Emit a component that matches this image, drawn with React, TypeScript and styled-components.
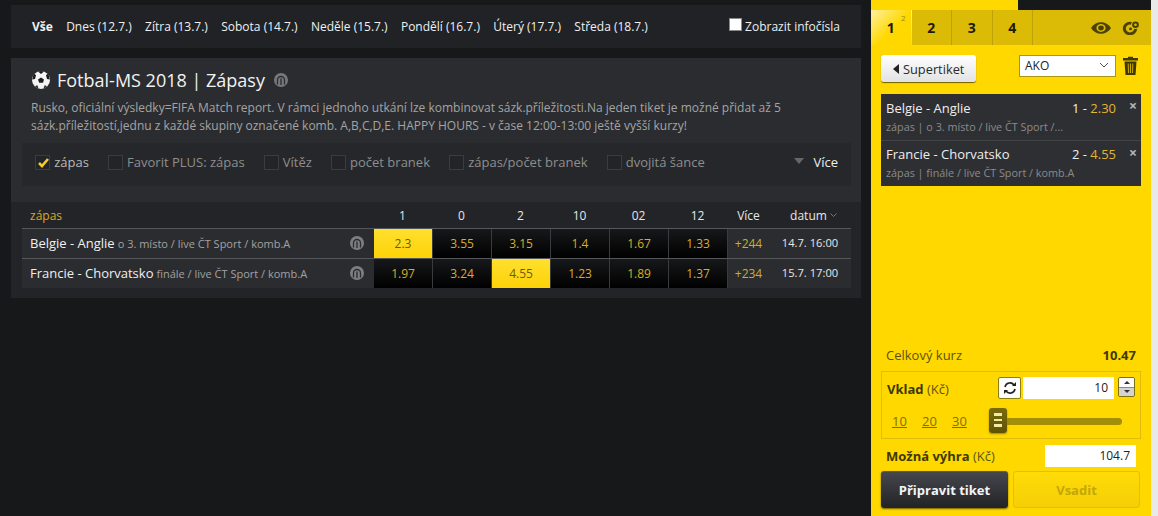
import React from "react";
import styled, { createGlobalStyle } from "styled-components";

const Global = createGlobalStyle`
  html, body { margin: 0; padding: 0; height: 100%; background: #17181a; overflow: hidden; }
  #root { height: 516px; }
  * { box-sizing: border-box; }
`;

const Page = styled.div`
  display: flex;
  width: 1158px;
  height: 516px;
  font-family: "Open Sans", "Liberation Sans", sans-serif;
  font-size: 12px;
  color: #fff;
`;

const Main = styled.main`
  width: 871px;
  padding: 5px 10px 0 11px;
  display: flex;
  flex-direction: column;
  gap: 10px;
`;

const DayBar = styled.nav`
  height: 43px;
  background: #212225;
  display: flex;
  align-items: center;
  padding: 0 21px 0 21px;
`;

const Day = styled.span<{ $active?: boolean }>`
  margin-right: 13.3px;
  font-weight: ${(p) => (p.$active ? 700 : 400)};
  color: #f0f0f0;
  white-space: nowrap;
`;

const InfoToggle = styled.label`
  margin-left: auto;
  display: flex;
  align-items: center;
  gap: 3px;
  color: #eee;
`;

const WhiteBox = styled.span`
  width: 13px;
  height: 13px;
  background: #fff;
  border: 1px solid #8a8a8a;
  margin-top: -4px;
`;

const Panel = styled.section`
  background: #2b2c2f;
  height: 240px;
  display: flex;
  flex-direction: column;
`;

const Head = styled.div`
  padding: 10px 11px 0 21px;
`;

const Title = styled.h1`
  margin: 0;
  display: flex;
  align-items: center;
  font-size: 18px;
  line-height: 24px;
  font-weight: 400;
  color: #f2f2f2;
`;

const Ball = styled.svg`
  width: 18px;
  height: 18px;
  margin-right: 7px;
`;

const StatIcon = styled.svg<{ $size?: number }>`
  width: ${(p) => p.$size ?? 14}px;
  height: ${(p) => p.$size ?? 14}px;
  flex: none;
`;

const TitleStat = styled.span`
  display: flex;
  margin-left: 9px;
  margin-top: -1px;
`;

const Desc = styled.p`
  margin: 7px 0 0 -1px;
  font-size: 12px;
  line-height: 18px;
  color: #a4a4a4;
  white-space: nowrap;
`;

const Filters = styled.div`
  margin: 8px 10px 0 11px;
  height: 43px;
  background: #26272a;
  display: flex;
  align-items: center;
  padding: 0 13px 5px 13px;
`;

const Filter = styled.label<{ $on?: boolean }>`
  display: flex;
  align-items: center;
  gap: 4.2px;
  margin-right: 19px;
  font-size: 13px;
  color: ${(p) => (p.$on ? "#b9b9b9" : "#8e8e8e")};
  white-space: nowrap;
`;

const Box = styled.span<{ $on?: boolean }>`
  position: relative;
  width: 15px;
  height: 15px;
  background: #232427;
  border: 1px solid #3b3c40;
  flex: none;
`;

const Tick = styled.svg`
  position: absolute;
  left: 0;
  top: -1px;
  width: 15px;
  height: 15px;
`;

const More = styled.div`
  margin-left: auto;
  display: flex;
  align-items: center;
  gap: 9px;
  color: #eee;
  font-size: 13px;
`;

const Caret = styled.span`
  width: 0;
  height: 0;
  border-left: 5.5px solid transparent;
  border-right: 5.5px solid transparent;
  border-top: 6px solid #66676a;
  margin-top: -3px;
`;

const Table = styled.div`
  margin: 16px 0 0 0;
  padding: 0 10px 10px 11px;
  background: #232427;
  flex: 1;
`;

const Cols = "352px repeat(6, 59px) 41px 82px";

const HeadRow = styled.div`
  display: grid;
  grid-template-columns: ${Cols};
  height: 26px;
  align-items: center;
  text-align: center;
  color: #e6e6e6;
`;

const HeadName = styled.span`
  text-align: left;
  padding-left: 8px;
  color: #d9a925;
  font-size: 12px;
`;

const ColHead = styled.span`
  padding-right: 2px;
`;

const SortCell = styled.span`
  display: flex;
  align-items: center;
  justify-content: center;
  gap: 3px;
  padding-left: 7px;
`;

const Row = styled.div`
  display: grid;
  grid-template-columns: ${Cols};
  height: 30px;
  border-top: 1px solid #55565a;
  background: #2b2c2f;
  align-items: stretch;
`;

const Match = styled.div`
  display: flex;
  align-items: center;
  padding: 0 10px 1px 8px;
  white-space: nowrap;
  color: #f0f0f0;
  font-size: 13px;
`;

const MatchNote = styled.span`
  margin-left: 3px;
  font-size: 11px;
  color: #a2a2a2;
`;

const MatchStat = styled.span`
  display: flex;
  margin-left: auto;
`;

const Odd = styled.div<{ $on?: boolean }>`
  display: flex;
  align-items: center;
  justify-content: center;
  padding-bottom: 1px;
  border-right: 1px solid #3a3b3e;
  background: ${(p) => (p.$on ? "linear-gradient(#ffe02e, #fdd207)" : "linear-gradient(#17181a, #000)")};
  color: ${(p) => (p.$on ? "#6e5a08" : "#d9ad28")};
`;

const MoreCell = styled.div`
  display: flex;
  align-items: center;
  justify-content: center;
  color: #c9b02b;
  padding-bottom: 1px;
`;

const DateCell = styled.div`
  display: flex;
  align-items: center;
  justify-content: center;
  font-size: 11.2px;
  color: #e8e8e8;
  padding-bottom: 3px;
`;

const Side = styled.aside`
  width: 280px;
  background: #ffd800;
  display: flex;
  flex-direction: column;
  color: #4a4000;
`;

const PageEdge = styled.div`
  width: 7px;
  background: #e9e9e9;
`;

const SideTop = styled.div`
  height: 10px;
  background: #17181a;
  display: flex;
`;

const SideTopFill = styled.div`
  width: 147px;
  background: #ffd800;
`;

const TabBar = styled.div`
  height: 35px;
  background: #dcbb06;
  display: flex;
  align-items: stretch;
`;

const Tab = styled.div<{ $on?: boolean }>`
  position: relative;
  width: 40.5px;
  display: flex;
  align-items: center;
  justify-content: center;
  font-size: 14px;
  font-weight: 700;
  color: #1d1a05;
  border-right: 1px solid #bda207;
  background: ${(p) => (p.$on ? "linear-gradient(135deg, #fff1a0, #ffd800 55%)" : "transparent")};
  border-right-color: ${(p) => (p.$on ? "transparent" : "#bda207")};
`;

const TabCount = styled.sup`
  position: absolute;
  right: 5px;
  top: 3px;
  font-size: 8px;
  line-height: 10px;
  font-weight: 400;
  color: #9d8a1a;
`;

const TabIcons = styled.div`
  margin-left: auto;
  display: flex;
  align-items: center;
  gap: 11px;
  padding-right: 11px;
`;

const Controls = styled.div`
  display: flex;
  align-items: flex-start;
  padding: 10px 10px 0 10px;
`;

const SuperBtn = styled.button`
  width: 95px;
  height: 27px;
  padding: 0 0 0 12px;
  border: 0;
  border-radius: 3px;
  background: linear-gradient(#fff, #e2e2e2);
  box-shadow: 0 1px 1px #6e5f00;
  font: 400 12.8px "Open Sans", sans-serif;
  color: #2a2a2a;
  display: flex;
  align-items: center;
  gap: 4px;
`;

const LeftArrow = styled.span`
  width: 0;
  height: 0;
  border-top: 5px solid transparent;
  border-bottom: 5px solid transparent;
  border-right: 6px solid #222;
`;

const Select = styled.div`
  margin-left: auto;
  width: 97px;
  height: 22px;
  background: #fff;
  border: 1px solid #a9961a;
  display: flex;
  align-items: center;
  justify-content: space-between;
  padding: 0 6px 2px 5px;
  font-size: 12px;
  color: #222;
`;

const Trash = styled.svg`
  width: 15px;
  height: 19px;
  margin: 1px 3px 0 7px;
`;

const Slip = styled.div`
  margin: 12px 10px 0 10px;
  background: #2e2f33;
`;

const SlipItem = styled.div`
  position: relative;
  height: 46px;
  padding: 4px 5px 0;
  & + & {
    padding-top: 3px;
    border-top: 1px solid #434448;
  }
`;

const SlipTop = styled.div`
  display: flex;
  justify-content: space-between;
  padding-right: 20px;
  color: #eee;
  font-size: 13px;
  line-height: 20px;
`;

const SlipOdd = styled.span`
  color: #e2b52a;
`;

const SlipSub = styled.div`
  margin-top: 1px;
  font-size: 10.8px;
  line-height: 16px;
  color: #8b8b8b;
  white-space: nowrap;
`;

const SlipClose = styled.span`
  position: absolute;
  right: 4px;
  top: 3px;
  font-size: 14px;
  line-height: 18px;
  font-weight: 700;
  color: #b5b5b5;
`;

const Bottom = styled.div`
  margin-top: auto;
  padding: 0 10px;
`;

const TotalRow = styled.div`
  display: flex;
  justify-content: space-between;
  padding: 0 5px;
  font-size: 13px;
  line-height: 20px;
  color: #5c5210;
  & b {
    color: #3f3800;
  }
`;

const Stake = styled.div`
  margin-top: 6px;
  height: 68px;
  border: 1px solid #e0bd09;
  padding: 5px 5px 0;
`;

const StakeTop = styled.div`
  display: flex;
  align-items: flex-start;
`;

const Label = styled.span`
  font-size: 13px;
  line-height: 22px;
  color: #5f5412;
  & b {
    font-weight: 700;
    color: #3f3800;
  }
`;

const StakeLabel = styled(Label)`
  padding-top: 1px;
`;

const RefreshBtn = styled.span`
  margin-left: auto;
  margin-right: 2px;
  width: 23px;
  height: 22px;
  display: flex;
  align-items: center;
  justify-content: center;
  background: #fff;
  border: 1px solid #8d7c10;
  border-radius: 2px;
`;

const Input = styled.div<{ $w: number }>`
  width: ${(p) => p.$w}px;
  height: 22px;
  background: #fff;
  color: #222;
  font-size: 12px;
  line-height: 21px;
  text-align: right;
  padding-right: 6px;
`;

const Spin = styled.div`
  margin-left: 4px;
  width: 17px;
  height: 20px;
  border: 1px solid #7d7010;
  border-radius: 2px;
  overflow: hidden;
  display: flex;
  flex-direction: column;
`;

const SpinPart = styled.span<{ $down?: boolean }>`
  flex: 1;
  display: flex;
  align-items: center;
  justify-content: center;
  background: ${(p) => (p.$down ? "#d4d4d4" : "#fff")};
  border-top: ${(p) => (p.$down ? "1px solid #8a8a8a" : "0")};
`;

const Up = styled.span`
  width: 0;
  height: 0;
  border-left: 3px solid transparent;
  border-right: 3px solid transparent;
  border-bottom: 3px solid #333;
`;

const Down = styled(Up)`
  transform: rotate(180deg);
`;

const StakeBottom = styled.div`
  display: flex;
  align-items: center;
  height: 20px;
  margin-top: 11px;
  padding-left: 5px;
`;

const Quick = styled.span`
  width: 30px;
  font-size: 13px;
  color: #7e6e06;
  text-decoration: underline;
`;

const Track = styled.div`
  position: relative;
  margin-left: 11px;
  width: 129px;
  height: 7px;
  background: #a48d07;
  border-radius: 4px;
`;

const Thumb = styled.span`
  position: absolute;
  left: -4px;
  top: -10px;
  width: 18px;
  height: 25px;
  border-radius: 3px;
  background: linear-gradient(#7a6b08, #5f5206);
  box-shadow: 0 1px 2px #9c8806;
  display: flex;
  flex-direction: column;
  align-items: center;
  justify-content: center;
  gap: 3px;
`;

const Grip = styled.i`
  width: 8px;
  height: 2.5px;
  background: #f2e9a8;
`;

const WinRow = styled.div`
  margin-top: 6px;
  display: flex;
  align-items: center;
  justify-content: space-between;
  padding: 0 5px;
`;

const Buttons = styled.div`
  display: flex;
  gap: 5px;
  margin: 4px 0 8px;
`;

const Prepare = styled.button`
  width: 127px;
  height: 37px;
  border: 0;
  border-top: 1px solid #5a5b60;
  border-radius: 3px;
  background: linear-gradient(#46474d, #222326);
  box-shadow: 0 1px 2px #6a5c00;
  color: #f4f4f4;
  font: 700 13px "Open Sans", sans-serif;
`;

const Place = styled.button`
  width: 127px;
  height: 37px;
  border: 1px solid #e3c000;
  border-radius: 3px;
  background: linear-gradient(#ffdb08, #f5cf05);
  color: #c4a60a;
  font: 700 13px "Open Sans", sans-serif;
`;

const StatGlyph = ({ size, color }: { size?: number; color: string }) => (
  <StatIcon $size={size} viewBox="0 0 14 14">
    <circle cx="7" cy="7" r="7" fill={color} />
    <path d="M3.500 11.500V7a3.500 3.500 0 0 1 7 0v4.500M7 12V5.500" fill="none" stroke="#2b2c2f" strokeWidth="1.300" />
  </StatIcon>
);

const days = ["Dnes (12.7.)", "Zítra (13.7.)", "Sobota (14.7.)", "Neděle (15.7.)", "Pondělí (16.7.)", "Úterý (17.7.)", "Středa (18.7.)"];
const filters = ["Favorit PLUS: zápas", "Vítěz", "počet branek", "zápas/počet branek", "dvojitá šance"];
const columns = ["1", "0", "2", "10", "02", "12"];
const matches = [
  { name: "Belgie - Anglie", note: "o 3. místo / live ČT Sport / komb.A", odds: ["2.3", "3.55", "3.15", "1.4", "1.67", "1.33"], on: 0, more: "+244", date: "14.7. 16:00" },
  { name: "Francie - Chorvatsko", note: "finále / live ČT Sport / komb.A", odds: ["1.97", "3.24", "4.55", "1.23", "1.89", "1.37"], on: 2, more: "+234", date: "15.7. 17:00" },
];

export default function App() {
  return (
    <Page>
      <Global />
      <Main>
        <DayBar>
          <Day $active>Vše</Day>
          {days.map((d) => (
            <Day key={d}>{d}</Day>
          ))}
          <InfoToggle>
            <WhiteBox />
            Zobrazit infočísla
          </InfoToggle>
        </DayBar>
        <Panel>
          <Head>
            <Title>
              <Ball viewBox="0 0 18 18">
                <circle cx="9" cy="9" r="9" fill="#f4f4f4" />
                <path d="M6 0.6L9 3l3-2.4A9 9 0 0 0 6 .6zM9 6.500l3 2-1 3.300H7.200L6 8.500zM.2 8.500l2.800-.5 1-3.700-1.600-1.500A9 9 0 0 0 .2 8.500zM17.800 8.500L15 8l-1-3.700 1.600-1.500a9 9 0 0 1 2.200 5.700zM3 15.300l2.300-1 1.200 3.300A9 9 0 0 1 3 15.300zM15 15.300l-2.300-1-1.200 3.300a9 9 0 0 0 3.500-2.300z" fill="#1c1c1c" />
              </Ball>
              Fotbal-MS 2018 | Zápasy
              <TitleStat>
                <StatGlyph size={14} color="#77787a" />
              </TitleStat>
            </Title>
            <Desc>
              Rusko, oficiální výsledky=FIFA Match report. V rámci jednoho utkání lze kombinovat sázk.příležitosti.Na jeden tiket je možné přidat až 5
              <br />
              sázk.příležitostí,jednu z každé skupiny označené komb. A,B,C,D,E. HAPPY HOURS - v čase 12:00-13:00 ještě vyšší kurzy!
            </Desc>
          </Head>
          <Filters>
            <Filter $on>
              <Box $on>
                <Tick viewBox="0 0 15 15">
                  <path d="M3 8l3 3 6-7" fill="none" stroke="#f4c92a" strokeWidth="2.600" />
                </Tick>
              </Box>
              zápas
            </Filter>
            {filters.map((f) => (
              <Filter key={f}>
                <Box />
                {f}
              </Filter>
            ))}
            <More>
              <Caret />
              Více
            </More>
          </Filters>
          <Table>
            <HeadRow>
              <HeadName>zápas</HeadName>
              {columns.map((c) => (
                <ColHead key={c}>{c}</ColHead>
              ))}
              <span>Více</span>
              <SortCell>
                datum
                <svg width="7" height="4" viewBox="0 0 7 4">
                  <path d="M.5.5l3 3 3-3" fill="none" stroke="#77787a" />
                </svg>
              </SortCell>
            </HeadRow>
            {matches.map((m) => (
              <Row key={m.name}>
                <Match>
                  {m.name}
                  <MatchNote>{m.note}</MatchNote>
                  <MatchStat>
                    <StatGlyph color="#7d7e80" />
                  </MatchStat>
                </Match>
                {m.odds.map((o, i) => (
                  <Odd key={i} $on={i === m.on}>
                    {o}
                  </Odd>
                ))}
                <MoreCell>{m.more}</MoreCell>
                <DateCell>{m.date}</DateCell>
              </Row>
            ))}
          </Table>
        </Panel>
      </Main>
      <Side>
        <SideTop>
          <SideTopFill />
        </SideTop>
        <TabBar>
          <Tab $on>
            1<TabCount>2</TabCount>
          </Tab>
          <Tab>2</Tab>
          <Tab>3</Tab>
          <Tab>4</Tab>
          <TabIcons>
            <svg width="20" height="12" viewBox="0 0 20 14" preserveAspectRatio="none">
              <path d="M0 7c4.500-9 15.500-9 20 0-4.500 9-15.500 9-20 0z" fill="#4a4103" />
              <circle cx="10" cy="7" r="4.600" fill="#dcbb06" />
              <circle cx="10" cy="7" r="2.800" fill="#4a4103" />
            </svg>
            <svg width="18" height="15" viewBox="0 0 18 16" preserveAspectRatio="none">
              <circle cx="8" cy="9" r="5.700" fill="none" stroke="#4a4103" strokeWidth="3" />
              <circle cx="13.500" cy="5" r="4.500" fill="#dcbb06" />
              <circle cx="13.500" cy="5" r="3.400" fill="#4a4103" />
              <circle cx="13.500" cy="5" r="1.300" fill="#dcbb06" />
              <circle cx="8.500" cy="9.500" r="1.500" fill="#4a4103" />
            </svg>
          </TabIcons>
        </TabBar>
        <Controls>
          <SuperBtn>
            <LeftArrow />
            Supertiket
          </SuperBtn>
          <Select>
            AKO
            <svg width="10" height="6" viewBox="0 0 10 6">
              <path d="M1 1l4 4 4-4" fill="none" stroke="#555" />
            </svg>
          </Select>
          <Trash viewBox="0 0 15 19">
            <path d="M5 2V.8h5V2h5v2.500H0V2zM1.500 5.500h12L12.500 19h-10z" fill="#3f3800" />
            <path d="M5.200 7.500l.3 9.500M7.500 7.500V17M9.800 7.500L9.500 17" stroke="#c9ab0a" strokeWidth="1" />
          </Trash>
        </Controls>
        <Slip>
          <SlipItem>
            <SlipTop>
              <span>Belgie - Anglie</span>
              <span>
                1 - <SlipOdd>2.30</SlipOdd>
              </span>
            </SlipTop>
            <SlipSub>zápas | o 3. místo / live ČT Sport /...</SlipSub>
            <SlipClose>×</SlipClose>
          </SlipItem>
          <SlipItem>
            <SlipTop>
              <span>Francie - Chorvatsko</span>
              <span>
                2 - <SlipOdd>4.55</SlipOdd>
              </span>
            </SlipTop>
            <SlipSub>zápas | finále / live ČT Sport / komb.A</SlipSub>
            <SlipClose>×</SlipClose>
          </SlipItem>
        </Slip>
        <Bottom>
          <TotalRow>
            <span>Celkový kurz</span>
            <b>10.47</b>
          </TotalRow>
          <Stake>
            <StakeTop>
              <StakeLabel>
                <b>Vklad</b> (Kč)
              </StakeLabel>
              <RefreshBtn>
                <svg width="14" height="12" viewBox="0 0 14 12">
                  <path d="M2 5a5 5 0 0 1 9-2M12 7a5 5 0 0 1-9 2" fill="none" stroke="#222" strokeWidth="1.600" />
                  <path d="M9 4h4V0zM5 8H1v4z" fill="#222" />
                </svg>
              </RefreshBtn>
              <Input $w={91}>10</Input>
              <Spin>
                <SpinPart>
                  <Up />
                </SpinPart>
                <SpinPart $down>
                  <Down />
                </SpinPart>
              </Spin>
            </StakeTop>
            <StakeBottom>
              <Quick>10</Quick>
              <Quick>20</Quick>
              <Quick>30</Quick>
              <Track>
                <Thumb>
                  <Grip />
                  <Grip />
                  <Grip />
                </Thumb>
              </Track>
            </StakeBottom>
          </Stake>
          <WinRow>
            <Label>
              <b>Možná výhra</b> (Kč)
            </Label>
            <Input $w={91}>104.7</Input>
          </WinRow>
          <Buttons>
            <Prepare>Připravit tiket</Prepare>
            <Place>Vsadit</Place>
          </Buttons>
        </Bottom>
      </Side>
      <PageEdge />
    </Page>
  );
}
